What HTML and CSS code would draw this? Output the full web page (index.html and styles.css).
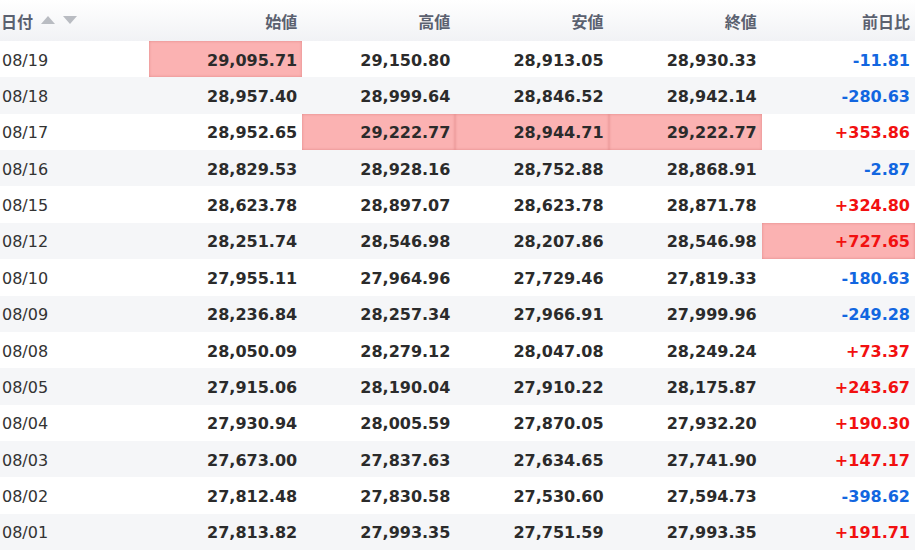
FILE: index.html
```html
<!doctype html>
<html lang="ja">
<head>
    <meta charset="UTF-8">
    <title>株価</title>
    <link rel="stylesheet" href="styles.css">
</head>
<body>
    <table class="price-table">
        <colgroup>
            <col class="col-date">
            <col class="col-num"><col class="col-num"><col class="col-num"><col class="col-num"><col class="col-num">
        </colgroup>
        <thead>
            <tr>
                <th class="th-date">日付<span class="sort"><i class="up"></i><i class="down"></i></span></th>
                <th>始値</th>
                <th>高値</th>
                <th>安値</th>
                <th>終値</th>
                <th>前日比</th>
            </tr>
        </thead>
        <tbody>
            <tr><td class="date">08/19</td><td class="hl">29,095.71</td><td>29,150.80</td><td>28,913.05</td><td>28,930.33</td><td class="minus">-11.81</td></tr>
            <tr><td class="date">08/18</td><td>28,957.40</td><td>28,999.64</td><td>28,846.52</td><td>28,942.14</td><td class="minus">-280.63</td></tr>
            <tr><td class="date">08/17</td><td>28,952.65</td><td class="hl">29,222.77</td><td class="hl">28,944.71</td><td class="hl">29,222.77</td><td class="plus">+353.86</td></tr>
            <tr><td class="date">08/16</td><td>28,829.53</td><td>28,928.16</td><td>28,752.88</td><td>28,868.91</td><td class="minus">-2.87</td></tr>
            <tr><td class="date">08/15</td><td>28,623.78</td><td>28,897.07</td><td>28,623.78</td><td>28,871.78</td><td class="plus">+324.80</td></tr>
            <tr><td class="date">08/12</td><td>28,251.74</td><td>28,546.98</td><td>28,207.86</td><td>28,546.98</td><td class="plus hl">+727.65</td></tr>
            <tr><td class="date">08/10</td><td>27,955.11</td><td>27,964.96</td><td>27,729.46</td><td>27,819.33</td><td class="minus">-180.63</td></tr>
            <tr><td class="date">08/09</td><td>28,236.84</td><td>28,257.34</td><td>27,966.91</td><td>27,999.96</td><td class="minus">-249.28</td></tr>
            <tr><td class="date">08/08</td><td>28,050.09</td><td>28,279.12</td><td>28,047.08</td><td>28,249.24</td><td class="plus">+73.37</td></tr>
            <tr><td class="date">08/05</td><td>27,915.06</td><td>28,190.04</td><td>27,910.22</td><td>28,175.87</td><td class="plus">+243.67</td></tr>
            <tr><td class="date">08/04</td><td>27,930.94</td><td>28,005.59</td><td>27,870.05</td><td>27,932.20</td><td class="plus">+190.30</td></tr>
            <tr><td class="date">08/03</td><td>27,673.00</td><td>27,837.63</td><td>27,634.65</td><td>27,741.90</td><td class="plus">+147.17</td></tr>
            <tr><td class="date">08/02</td><td>27,812.48</td><td>27,830.58</td><td>27,530.60</td><td>27,594.73</td><td class="minus">-398.62</td></tr>
            <tr><td class="date">08/01</td><td>27,813.82</td><td>27,993.35</td><td>27,751.59</td><td>27,993.35</td><td class="plus">+191.71</td></tr>
        </tbody>
    </table>
</body>
</html>
```

FILE: styles.css
```css
body {
    margin: 0;
    background: #fff;
    font-family: "DejaVu Sans", "Noto Sans CJK JP", sans-serif;
    color: #333;
}

.price-table {
    width: 915px;
    border-collapse: collapse;
    table-layout: fixed;
}

.col-date {
    width: 149px;
}

.price-table th {
    height: 41px;
    padding: 1px 5px 0;
    box-sizing: border-box;
    text-align: right;
    font-family: "Noto Sans CJK JP", sans-serif;
    font-size: 16px;
    font-weight: bold;
    color: #5b6170;
    background: linear-gradient(#fff, #f1f2f5);
}

.price-table th.th-date {
    text-align: left;
    padding-left: 1px;
}

.sort {
    display: inline-flex;
    gap: 8px;
    margin-left: 8px;
    vertical-align: 4px;
}

.sort i {
    width: 0;
    height: 0;
    border-left: 7px solid transparent;
    border-right: 7px solid transparent;
}

.sort .up {
    border-bottom: 8px solid #b9bcc2;
}

.sort .down {
    border-top: 8px solid #b9bcc2;
}

.price-table td {
    height: 36.36px;
    padding: 2px 5px 0;
    box-sizing: border-box;
    text-align: right;
    font-size: 16px;
    font-weight: bold;
    color: #2b2b2b;
}

.price-table tbody tr:nth-child(even) td {
    background: #f5f6f8;
}

.price-table td.date {
    text-align: left;
    padding-left: 2px;
    font-weight: normal;
    color: #333;
}

.price-table td.minus {
    color: #1266e0;
}

.price-table td.plus {
    color: #f21010;
}

.price-table td.hl,
.price-table tbody tr:nth-child(even) td.hl {
    background: #fbb2b2;
    box-shadow: inset 0 0 3px rgba(190, 80, 80, 0.45);
}
```
